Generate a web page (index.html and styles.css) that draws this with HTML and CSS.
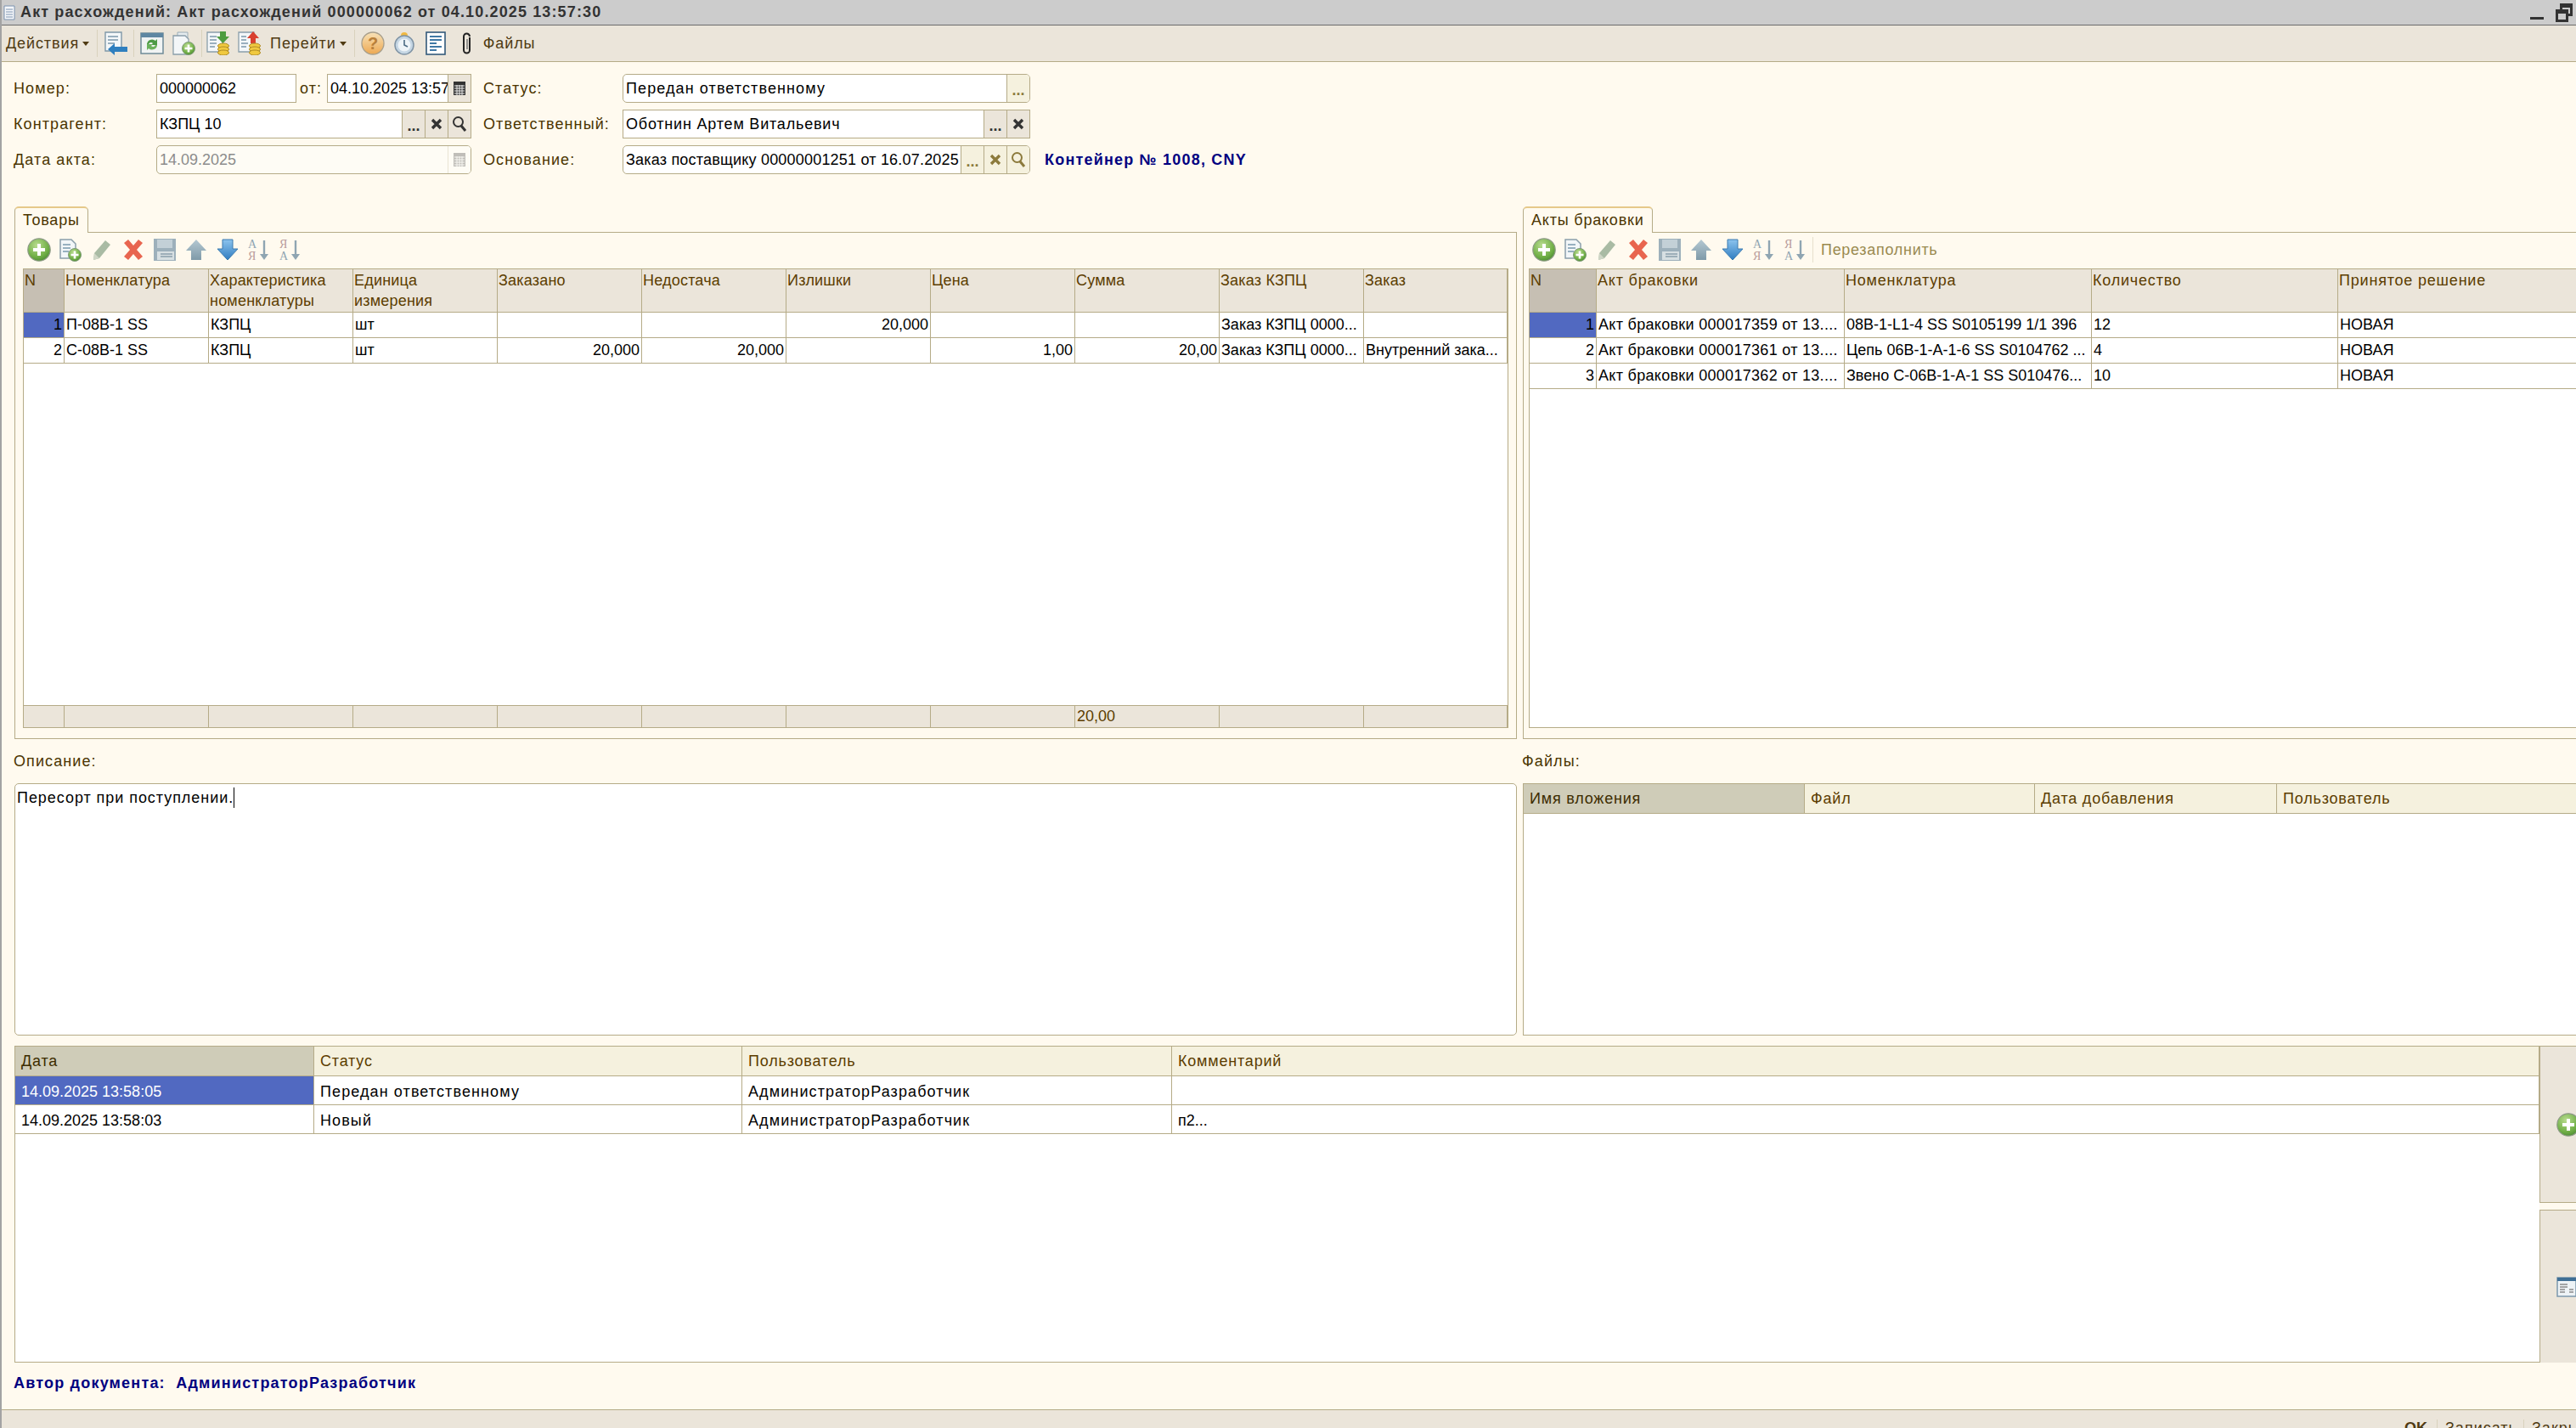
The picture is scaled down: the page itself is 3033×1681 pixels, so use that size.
FILE: index.html
```html
<!DOCTYPE html>
<html lang="ru">
<head>
    <meta charset="utf-8">
    <title>Акт расхождений</title>
    <link rel="stylesheet" href="styles.css">
</head>
<body>
    <!-- набор иконок -->
    <svg class="sprite" xmlns="http://www.w3.org/2000/svg">
        <defs>
            <radialGradient id="g-green" cx="40%" cy="30%" r="75%">
                <stop offset="0" stop-color="#b9dc8f"/>
                <stop offset="0.7" stop-color="#6fae45"/>
                <stop offset="1" stop-color="#4c8a34"/>
            </radialGradient>
            <linearGradient id="g-blue" x1="0" y1="0" x2="0" y2="1">
                <stop offset="0" stop-color="#8cc4ee"/>
                <stop offset="1" stop-color="#2f7cc0"/>
            </linearGradient>
            <linearGradient id="g-gray" x1="0" y1="0" x2="0" y2="1">
                <stop offset="0" stop-color="#b4c8d2"/>
                <stop offset="1" stop-color="#7f9aa8"/>
            </linearGradient>
            <linearGradient id="g-orange" x1="0" y1="0" x2="0" y2="1">
                <stop offset="0" stop-color="#f8e2b8"/>
                <stop offset="1" stop-color="#eda851"/>
            </linearGradient>
        </defs>
        <symbol id="i-add" viewBox="0 0 28 28">
            <circle cx="14" cy="14" r="13.2" fill="url(#g-green)" stroke="#8d9a86" stroke-width="1.2"/>
            <path d="M14 7v14M7 14h14" stroke="#fff" stroke-width="4"/>
        </symbol>
        <symbol id="i-copyadd" viewBox="0 0 28 28">
            <path d="M2 2h13l5 5v17H2z" fill="#f2f6f8" stroke="#8a9eaa" stroke-width="1.5"/>
            <path d="M5 8h9M5 12h9M5 16h7" stroke="#7a99ad" stroke-width="1.6"/>
            <circle cx="19" cy="20" r="7.5" fill="url(#g-green)" stroke="#7f9a78"/>
            <path d="M19 15.5v9M14.5 20h9" stroke="#fff" stroke-width="2.6"/>
        </symbol>
        <symbol id="i-edit" viewBox="0 0 28 28">
            <path d="M18 3l6 5-13 16-7 2 1-8z" fill="#a9bba4"/>
            <path d="M5 18l6 6-7 2z" fill="#cfd6c6"/>
        </symbol>
        <symbol id="i-del" viewBox="0 0 28 28">
            <path d="M3 6l5-4 6 7 6-7 5 4-7 8 7 8-5 4-6-7-6 7-5-4 7-8z" fill="#e8654f"/>
        </symbol>
        <symbol id="i-save" viewBox="0 0 28 28">
            <rect x="1" y="1" width="26" height="26" fill="#9db0bb"/>
            <rect x="5" y="2" width="18" height="10" fill="#c3d0d7"/>
            <rect x="5" y="16" width="20" height="10" fill="#d7dfe2"/>
            <path d="M9 19h14M9 22h14" stroke="#8aa0ac" stroke-width="1.500"/>
        </symbol>
        <symbol id="i-up" viewBox="0 0 28 28">
            <path d="M14 2l12 13h-6v11H8V15H2z" fill="url(#g-gray)"/>
        </symbol>
        <symbol id="i-down" viewBox="0 0 28 28">
            <path d="M8 2h12v11h6L14 26 2 13h6z" fill="url(#g-blue)" stroke="#3a7ab0"/>
        </symbol>
        <symbol id="i-sortarrow" viewBox="0 0 28 28">
            <path d="M20 3v19" stroke="#8fa5b2" stroke-width="2.4"/>
            <path d="M15 19h10l-5 7z" fill="#8fa5b2"/>
        </symbol>
        <symbol id="i-docback" viewBox="0 0 28 28">
            <path d="M2 1h19v22H2z" fill="#f4f7f9" stroke="#7f98a8" stroke-width="1.4"/>
            <path d="M5 6h12M5 10h12M5 14h8" stroke="#7b98ab" stroke-width="1.6"/>
            <path d="M28 18v6H13v4L5 21l8-7v4z" fill="#2f7fbf"/>
        </symbol>
        <symbol id="i-refresh" viewBox="0 0 28 28">
            <rect x="1" y="2" width="26" height="24" fill="#f0f3f3" stroke="#6f8a98" stroke-width="1.5"/>
            <rect x="1" y="2" width="26" height="5" fill="#5f87a2"/>
            <path d="M8 15a6 6 0 0 1 10-4l2-2v7h-7l2-2a3 3 0 0 0-5 1z" fill="#4c9a45"/>
            <path d="M20 16a6 6 0 0 1-10 4l-2 2v-7h7l-2 2a3 3 0 0 0 5-1z" fill="#6bb25c"/>
        </symbol>
        <symbol id="i-docplus" viewBox="0 0 28 28">
            <path d="M7 1h12v20H7z" fill="#e5ebee" stroke="#9aacb6"/>
            <path d="M2 5h14l4 4v18H2z" fill="#f3f6f8" stroke="#8a9eaa" stroke-width="1.3"/>
            <circle cx="20" cy="20" r="7.5" fill="url(#g-green)" stroke="#7f9a78"/>
            <path d="M20 15.5v9M15.5 20h9" stroke="#fff" stroke-width="2.6"/>
        </symbol>
        <symbol id="i-docin" viewBox="0 0 28 28">
            <path d="M1 1h18v23H1z" fill="#f4f7f9" stroke="#8a9eaa" stroke-width="1.3"/>
            <path d="M4 6h8M4 10h8M4 14h8M4 18h6" stroke="#7b98ab" stroke-width="1.6"/>
            <path d="M16 0h7v6h4l-7.500 8L12 6h4z" fill="#4d9c3f"/>
            <ellipse cx="20" cy="17" rx="6.500" ry="3" fill="#f0c93f" stroke="#b08c24"/>
            <ellipse cx="20" cy="21" rx="6.500" ry="3" fill="#f0c93f" stroke="#b08c24"/>
            <ellipse cx="20" cy="25" rx="6.500" ry="3" fill="#f0c93f" stroke="#b08c24"/>
        </symbol>
        <symbol id="i-docout" viewBox="0 0 28 28">
            <path d="M1 1h18v23H1z" fill="#f4f7f9" stroke="#8a9eaa" stroke-width="1.3"/>
            <path d="M4 6h6M4 10h6M4 14h8M4 18h6" stroke="#7b98ab" stroke-width="1.6"/>
            <path d="M15 14V8h-4l7-8 7 8h-4v6z" fill="#d9402f"/>
            <ellipse cx="20" cy="17" rx="6.500" ry="3" fill="#f0c93f" stroke="#b08c24"/>
            <ellipse cx="20" cy="21" rx="6.500" ry="3" fill="#f0c93f" stroke="#b08c24"/>
            <ellipse cx="20" cy="25" rx="6.500" ry="3" fill="#f0c93f" stroke="#b08c24"/>
        </symbol>
        <symbol id="i-clock" viewBox="0 0 28 28">
            <circle cx="14" cy="5" r="4" fill="#f0b942"/>
            <circle cx="14" cy="16" r="11" fill="#c5d6e4" stroke="#7f93a4" stroke-width="1.5"/>
            <circle cx="14" cy="16" r="7.500" fill="#eef4f8"/>
            <path d="M14 10v6l4 2" fill="none" stroke="#4c6b84" stroke-width="1.6"/>
        </symbol>
        <symbol id="i-list" viewBox="0 0 28 28">
            <rect x="3" y="1" width="22" height="26" fill="#fff" stroke="#33597a" stroke-width="1.6"/>
            <path d="M7 6h14M7 10h14M7 14h8M7 18h14M7 22h8" stroke="#3f78a5" stroke-width="1.8"/>
        </symbol>
        <symbol id="i-clip" viewBox="0 0 14 28">
            <path d="M10 7v15a3.500 3.500 0 0 1-7 0V6a3 3 0 0 1 7 0" fill="none" stroke="#222" stroke-width="2"/>
            <path d="M7 9v12" stroke="#777" stroke-width="1.500"/>
        </symbol>
        <symbol id="i-calendar" viewBox="0 0 16 18">
            <rect x="1" y="1" width="14" height="16" fill="#333"/>
            <path d="M2 6h12M2 9h12M2 12h12M2 15h12M5 5v12M8 5v12M11 5v12" stroke="#eee" stroke-width="1"/>
        </symbol>
        <symbol id="i-search" viewBox="0 0 18 20">
            <circle cx="7.500" cy="7.500" r="5.500" fill="none" stroke="currentColor" stroke-width="2"/>
            <path d="M11 12l5 6" stroke="currentColor" stroke-width="3"/>
        </symbol>
        <symbol id="i-cross" viewBox="0 0 14 14">
            <path d="M2 2l10 10M12 2L2 12" stroke="currentColor" stroke-width="3.400"/>
        </symbol>
        <symbol id="i-form" viewBox="0 0 24 24">
            <rect x="1" y="1" width="22" height="22" fill="#eef3f6" stroke="#7c98ad" stroke-width="1.500"/>
            <rect x="1" y="1" width="22" height="4" fill="#3f6f95"/>
            <path d="M4 9h9M4 12h9M4 15h6M4 18h6M15 15h5M15 18h5" stroke="#8b8b8b" stroke-width="1.500"/>
        </symbol>
    </svg>

    <div class="window">
        <div class="titlebar">
            <svg class="title-icon" viewBox="0 0 14 18"><path d="M1 1h12v16H1z" fill="#f5f7fa" stroke="#7d93b0"/><path d="M3 5h8M3 8h8M3 11h8M3 14h8" stroke="#7d93b0"/></svg>
            <span class="title-text">Акт расхождений: Акт расхождений 000000062 от 04.10.2025 13:57:30</span>
            <span class="win-min"></span>
            <span class="win-restore"><i class="win-back"></i><i class="win-front"></i></span>
        </div>

        <div class="toolbar">
            <span class="tb-menu">Действия<i class="caret"></i></span>
            <span class="tb-sep"></span>
            <svg class="tb-icon"><use href="#i-docback"/></svg>
            <span class="tb-sep"></span>
            <svg class="tb-icon"><use href="#i-refresh"/></svg>
            <svg class="tb-icon"><use href="#i-docplus"/></svg>
            <span class="tb-sep"></span>
            <svg class="tb-icon tb-icon-tight"><use href="#i-docin"/></svg>
            <svg class="tb-icon"><use href="#i-docout"/></svg>
            <span class="tb-menu tb-menu-go">Перейти<i class="caret"></i></span>
            <span class="tb-sep"></span>
            <svg class="tb-icon" viewBox="0 0 28 28">
                <circle cx="14" cy="14" r="13" fill="url(#g-orange)" stroke="#a89f8c" stroke-width="1.3"/>
                <text x="14" y="21" class="i-help-text">?</text>
            </svg>
            <svg class="tb-icon"><use href="#i-clock"/></svg>
            <svg class="tb-icon"><use href="#i-list"/></svg>
            <svg class="tb-clip"><use href="#i-clip"/></svg>
            <span class="tb-menu tb-files">Файлы</span>
        </div>

        <div class="form">
            <!-- шапка документа -->
            <div class="fields">
                <label class="lbl">Номер:</label>
                <div class="pair">
                    <div class="field field-number"><span class="field-text">000000062</span></div>
                    <span class="lbl lbl-from">от:</span>
                    <div class="field field-date">
                        <span class="field-text">04.10.2025 13:57:30</span>
                        <span class="fbtn"><svg class="ic-cal"><use href="#i-calendar"/></svg></span>
                    </div>
                </div>
                <label class="lbl lbl-mid">Статус:</label>
                <div class="field field-round">
                    <span class="field-text cyr">Передан ответственному</span>
                    <span class="fbtn fbtn-soft"><b class="dots">...</b></span>
                </div>
                <span></span>

                <label class="lbl">Контрагент:</label>
                <div class="field">
                    <span class="field-text">КЗПЦ 10</span>
                    <span class="fbtn"><b class="dots">...</b></span>
                    <span class="fbtn"><svg class="ic-cross"><use href="#i-cross"/></svg></span>
                    <span class="fbtn"><svg class="ic-search"><use href="#i-search"/></svg></span>
                </div>
                <label class="lbl lbl-mid">Ответственный:</label>
                <div class="field">
                    <span class="field-text cyr-soft">Оботнин Артем Витальевич</span>
                    <span class="fbtn"><b class="dots">...</b></span>
                    <span class="fbtn"><svg class="ic-cross"><use href="#i-cross"/></svg></span>
                </div>
                <span></span>

                <label class="lbl">Дата акта:</label>
                <div class="field field-round field-off">
                    <span class="field-text">14.09.2025</span>
                    <span class="fbtn fbtn-off"><svg class="ic-cal ic-cal-off"><use href="#i-calendar"/></svg></span>
                </div>
                <label class="lbl lbl-mid">Основание:</label>
                <div class="field field-round">
                    <span class="field-text field-basis">Заказ поставщику 00000001251 от 16.07.2025</span>
                    <span class="fbtn fbtn-soft"><b class="dots">...</b></span>
                    <span class="fbtn fbtn-soft"><svg class="ic-cross"><use href="#i-cross"/></svg></span>
                    <span class="fbtn fbtn-soft"><svg class="ic-search"><use href="#i-search"/></svg></span>
                </div>
                <span class="container-note">Контейнер № 1008, CNY</span>
            </div>

            <!-- табличные части -->
            <div class="panels">
                <div class="panel-col">
                    <div class="tabs"><span class="tab">Товары</span><span class="tab-line"></span></div>
                    <div class="panel">
                        <div class="list-tools">
                            <svg class="lt-icon"><use href="#i-add"/></svg>
                            <svg class="lt-icon"><use href="#i-copyadd"/></svg>
                            <svg class="lt-icon"><use href="#i-edit"/></svg>
                            <svg class="lt-icon"><use href="#i-del"/></svg>
                            <svg class="lt-icon"><use href="#i-save"/></svg>
                            <svg class="lt-icon"><use href="#i-up"/></svg>
                            <svg class="lt-icon"><use href="#i-down"/></svg>
                            <svg class="lt-icon" viewBox="0 0 28 28"><use href="#i-sortarrow"/><text x="1" y="12" class="i-sort-text i-sort-a">А</text><text x="1" y="26" class="i-sort-text i-sort-z">Я</text></svg>
                            <svg class="lt-icon" viewBox="0 0 28 28"><use href="#i-sortarrow"/><text x="1" y="12" class="i-sort-text i-sort-z">Я</text><text x="1" y="26" class="i-sort-text i-sort-a">А</text></svg>
                        </div>
                        <div class="grid-box">
                            <table class="grid grid-goods">
                                <colgroup>
                                    <col class="c-n"><col class="c-170"><col class="c-170"><col class="c-170"><col class="c-170"><col class="c-170"><col class="c-170"><col class="c-170"><col class="c-170"><col class="c-170"><col class="c-169">
                                </colgroup>
                                <tr class="head">
                                    <th class="th-n">N</th><th>Номенклатура</th><th>Характеристика номенклатуры</th><th>Единица измерения</th><th>Заказано</th><th>Недостача</th><th>Излишки</th><th>Цена</th><th>Сумма</th><th>Заказ КЗПЦ</th><th>Заказ</th>
                                </tr>
                                <tr>
                                    <td class="num td-sel">1</td><td>П-08В-1 SS</td><td>КЗПЦ</td><td>шт</td><td></td><td></td><td class="num">20,000</td><td></td><td></td><td>Заказ КЗПЦ 0000...</td><td></td>
                                </tr>
                                <tr>
                                    <td class="num">2</td><td>С-08В-1 SS</td><td>КЗПЦ</td><td>шт</td><td class="num">20,000</td><td class="num">20,000</td><td></td><td class="num">1,00</td><td class="num">20,00</td><td>Заказ КЗПЦ 0000...</td><td>Внутренний зака...</td>
                                </tr>
                            </table>
                            <table class="grid grid-total">
                                <colgroup>
                                    <col class="c-n"><col class="c-170"><col class="c-170"><col class="c-170"><col class="c-170"><col class="c-170"><col class="c-170"><col class="c-170"><col class="c-170"><col class="c-170"><col class="c-169">
                                </colgroup>
                                <tr>
                                    <td></td><td></td><td></td><td></td><td></td><td></td><td></td><td></td><td>20,00</td><td></td><td></td>
                                </tr>
                            </table>
                        </div>
                    </div>
                </div>
                <div class="panel-col">
                    <div class="tabs"><span class="tab">Акты браковки</span><span class="tab-line"></span></div>
                    <div class="panel panel-acts">
                        <div class="list-tools">
                            <svg class="lt-icon"><use href="#i-add"/></svg>
                            <svg class="lt-icon"><use href="#i-copyadd"/></svg>
                            <svg class="lt-icon"><use href="#i-edit"/></svg>
                            <svg class="lt-icon"><use href="#i-del"/></svg>
                            <svg class="lt-icon"><use href="#i-save"/></svg>
                            <svg class="lt-icon"><use href="#i-up"/></svg>
                            <svg class="lt-icon"><use href="#i-down"/></svg>
                            <svg class="lt-icon" viewBox="0 0 28 28"><use href="#i-sortarrow"/><text x="1" y="12" class="i-sort-text i-sort-a">А</text><text x="1" y="26" class="i-sort-text i-sort-z">Я</text></svg>
                            <svg class="lt-icon" viewBox="0 0 28 28"><use href="#i-sortarrow"/><text x="1" y="12" class="i-sort-text i-sort-z">Я</text><text x="1" y="26" class="i-sort-text i-sort-a">А</text></svg>
                            <span class="lt-sep"></span>
                            <span class="lt-cmd">Перезаполнить</span>
                        </div>
                        <div class="grid-box">
                            <table class="grid grid-acts">
                                <colgroup>
                                    <col class="c-n2"><col class="c-292"><col class="c-291"><col class="c-290"><col class="c-rest">
                                </colgroup>
                                <tr class="head">
                                    <th class="th-n">N</th><th>Акт браковки</th><th>Номенклатура</th><th>Количество</th><th>Принятое решение</th>
                                </tr>
                                <tr>
                                    <td class="num td-sel">1</td><td>Акт браковки 000017359 от 13....</td><td>08В-1-L1-4 SS S0105199 1/1 396</td><td>12</td><td>НОВАЯ</td>
                                </tr>
                                <tr>
                                    <td class="num">2</td><td>Акт браковки 000017361 от 13....</td><td>Цепь 06В-1-А-1-6 SS S0104762 ...</td><td>4</td><td>НОВАЯ</td>
                                </tr>
                                <tr>
                                    <td class="num">3</td><td>Акт браковки 000017362 от 13....</td><td>Звено С-06В-1-А-1 SS S010476...</td><td>10</td><td>НОВАЯ</td>
                                </tr>
                            </table>
                        </div>
                    </div>
                </div>
            </div>

            <!-- описание и файлы -->
            <div class="captions">
                <span class="lbl">Описание:</span>
                <span class="lbl">Файлы:</span>
            </div>
            <div class="notes">
                <div class="memo"><span class="memo-text">Пересорт при поступлении.</span><i class="text-caret"></i></div>
                <div class="files">
                    <table class="grid grid-files">
                        <colgroup>
                            <col class="c-331"><col class="c-271"><col class="c-285"><col class="c-rest">
                        </colgroup>
                        <tr class="head-soft">
                            <th class="th-sort">Имя вложения</th><th>Файл</th><th>Дата добавления</th><th>Пользователь</th>
                        </tr>
                    </table>
                </div>
            </div>

            <!-- история статусов -->
            <div class="history">
                <div class="history-box">
                    <table class="grid grid-history">
                        <colgroup>
                            <col class="c-352"><col class="c-504"><col class="c-506"><col class="c-rest">
                        </colgroup>
                        <tr class="head-soft">
                            <th class="th-sort">Дата</th><th>Статус</th><th>Пользователь</th><th>Комментарий</th>
                        </tr>
                        <tr>
                            <td class="td-sel">14.09.2025 13:58:05</td><td class="cyr">Передан ответственному</td><td class="cyr">АдминистраторРазработчик</td><td></td>
                        </tr>
                        <tr>
                            <td>14.09.2025 13:58:03</td><td class="cyr">Новый</td><td class="cyr">АдминистраторРазработчик</td><td>п2...</td>
                        </tr>
                    </table>
                </div>
                <div class="side">
                    <div class="side-btn side-btn-top"><svg class="lt-icon"><use href="#i-add"/></svg></div>
                    <div class="side-btn"><svg class="side-form"><use href="#i-form"/></svg></div>
                </div>
            </div>

            <div class="author">Автор документа:&nbsp; АдминистраторРазработчик</div>
        </div>

        <div class="footer">
            <span class="foot-btn foot-ok">OK</span>
            <span class="foot-btn">Записать</span>
            <span class="foot-btn">Закрыть</span>
        </div>
    </div>
</body>
</html>
```

FILE: styles.css
```css
/* страница */
html, body {
    margin: 0;
    height: 100%;
    overflow: hidden;
}

body {
    font-family: "Liberation Sans", Arial, sans-serif;
    font-size: 18px;
    color: #000;
    background: #fffaef;
}

/* display:none ломает градиенты в use */
.sprite {
    position: absolute;
    width: 0;
    height: 0;
}

.window {
    height: 1681px;
    width: 3033px;
    box-sizing: border-box;
    border-left: 2px solid #a3a3a3;
    display: flex;
    flex-direction: column;
    overflow: hidden;
}

/* кириллица в оригинале шире латиницы и цифр */
.cyr {
    letter-spacing: 1.1px;
}

.cyr-soft {
    letter-spacing: 0.8px;
}

/* заголовок окна */
.titlebar {
    height: 29px;
    flex: none;
    background: #ccc;
    border-bottom: 1px solid #6b6b6b;
    display: flex;
    align-items: center;
    padding-left: 2px;
    padding-right: 4px;
}

.title-icon {
    width: 14px;
    height: 18px;
    margin-right: 6px;
}

.title-text {
    font-weight: bold;
    color: #333;
    flex: 1;
    letter-spacing: 1.13px;
}

.win-min {
    width: 16px;
    height: 3px;
    background: #333;
    margin-right: 14px;
    margin-top: 14px;
}

.win-restore {
    display: block;
    width: 20px;
    height: 22px;
    position: relative;
}

.win-back, .win-front {
    position: absolute;
    box-sizing: border-box;
    border: 3px solid #333;
    border-top-width: 5px;
    width: 15px;
    height: 15px;
}

.win-back {
    right: 0;
    top: 0;
}

.win-front {
    left: 0;
    bottom: 0;
    background: #ccc;
}

/* панель команд */
.toolbar {
    height: 42px;
    flex: none;
    background: #ebe5da;
    border-bottom: 1px solid #b5ab87;
    display: flex;
    align-items: center;
    padding-left: 5px;
    gap: 7px;
    color: #4f3a12;
}

.tb-menu {
    display: flex;
    align-items: center;
    white-space: nowrap;
    letter-spacing: 0.9px;
}

.tb-menu-go {
    margin-left: 3px;
}

.caret {
    width: 0;
    height: 0;
    margin-left: 4px;
    margin-right: 2px;
    border-left: 4px solid transparent;
    border-right: 4px solid transparent;
    border-top: 5px solid #4f3a12;
}

.tb-sep {
    width: 1px;
    height: 32px;
    background: #d9d2bd;
}

.tb-icon {
    width: 28px;
    height: 28px;
}

.tb-icon + .tb-icon {
    margin-left: 2px;
}

.tb-icon-tight {
    margin-left: -2px;
}

.tb-clip {
    width: 14px;
    height: 28px;
    margin-left: 9px;
}

.tb-files {
    margin-left: 5px;
}

/* реквизиты */
.form {
    flex: 1;
    min-height: 0;
    display: flex;
    flex-direction: column;
    padding-left: 15px;
}

.fields {
    display: grid;
    grid-template-columns: 167px 371px 178px 480px 1fr;
    grid-auto-rows: 34px;
    row-gap: 8px;
    margin-top: 14px;
    align-items: center;
}

.lbl {
    color: #4b3500;
    white-space: nowrap;
    letter-spacing: 1.1px;
    margin-left: -1px;
}

.lbl-mid {
    margin-left: 14px;
}

.pair {
    display: flex;
    align-items: center;
    height: 34px;
}

.field {
    height: 34px;
    box-sizing: border-box;
    border: 1px solid #b5ab87;
    background: #fff;
    display: flex;
    overflow: hidden;
}

.field-number {
    width: 165px;
    flex: none;
}

.lbl-from {
    width: 36px;
    flex: none;
    margin-left: 0;
    padding-left: 4px;
    box-sizing: border-box;
}

.field-date {
    width: 170px;
    flex: none;
}

.field-round {
    border-radius: 5px;
}

.field-off {
    background: #fefcf5;
    color: #8c8c8c;
}

.field-text {
    flex: 1;
    min-width: 0;
    padding-left: 3px;
    line-height: 32px;
    white-space: nowrap;
    overflow: hidden;
}

.field-basis {
    letter-spacing: 0.2px;
}

.fbtn {
    flex: none;
    width: 26px;
    border-left: 1px solid #b5ab87;
    background: #ebe5da;
    display: flex;
    align-items: center;
    justify-content: center;
    color: #333;
}

.fbtn-soft {
    background: #f5f1de;
    color: #8c7a3c;
}

.fbtn-off {
    background: #fefcf5;
    border-left-color: #e9e4d3;
}

.dots {
    font-size: 18px;
    line-height: 34px;
    padding-top: 4px;
}

.ic-cal {
    width: 16px;
    height: 18px;
}

.ic-cal-off {
    opacity: 0.3;
}

.ic-cross {
    width: 14px;
    height: 14px;
}

.ic-search {
    width: 18px;
    height: 20px;
}

.container-note {
    font-weight: bold;
    color: #000080;
    margin-left: 17px;
    white-space: nowrap;
    letter-spacing: 1.2px;
}

/* панели с вкладками */
.panels {
    display: grid;
    grid-template-columns: 1769px 1300px;
    column-gap: 7px;
    margin-top: 38px;
}

.tabs {
    display: flex;
    height: 31px;
}

.tab {
    height: 31px;
    box-sizing: border-box;
    border: 1px solid #b5ab87;
    border-top: 2px solid #e6c98a;
    border-bottom: none;
    border-radius: 5px 5px 0 0;
    padding: 0 9px;
    line-height: 28px;
    color: #4b3500;
    letter-spacing: 0.8px;
}

.tab-line {
    flex: 1;
    border-bottom: 1px solid #b5ab87;
}

.panel {
    border: 1px solid #b5ab87;
    border-top: none;
    height: 596px;
    box-sizing: border-box;
    padding: 0 9px 12px;
    display: flex;
    flex-direction: column;
}

.panel-acts {
    padding-left: 6px;
}

.list-tools {
    height: 42px;
    box-sizing: border-box;
    padding-bottom: 2px;
    flex: none;
    display: flex;
    align-items: center;
    gap: 9px;
    padding-left: 5px;
}

.panel-acts .list-tools {
    padding-left: 4px;
}

.lt-icon {
    width: 28px;
    height: 28px;
    flex: none;
}

.lt-sep {
    width: 1px;
    height: 30px;
    background: #e6e0cc;
    margin-left: -3px;
}

.lt-cmd {
    color: #9a8a50;
    letter-spacing: 0.7px;
}

.i-sort-text {
    font-family: "Liberation Serif", serif;
    font-size: 14px;
}

.i-sort-a {
    fill: #8fa5b2;
}

.i-sort-z {
    fill: #b89a9a;
}

.i-help-text {
    font-size: 20px;
    font-weight: bold;
    text-anchor: middle;
    fill: #b9803a;
    letter-spacing: 0;
}

/* таблицы */
.grid-box {
    flex: 1;
    min-height: 0;
    border: 1px solid #b5ab87;
    background: #fff;
    display: flex;
    flex-direction: column;
    justify-content: space-between;
    overflow: hidden;
}

.grid {
    table-layout: fixed;
    border-collapse: separate;
    border-spacing: 0;
    width: 100%;
}

.grid th, .grid td {
    box-sizing: border-box;
    border-right: 1px solid #b5ab87;
    border-bottom: 1px solid #b5ab87;
    padding: 0 2px;
    font-weight: normal;
    text-align: left;
    white-space: nowrap;
    overflow: hidden;
    height: 30px;
}

.grid tr:first-child th {
    color: #5c3d00;
}

.grid .head th {
    background: #ebe5da;
    height: 51px;
    vertical-align: top;
    white-space: normal;
    line-height: 24px;
    padding-top: 1px;
    padding-left: 1px;
    letter-spacing: 0.2px;
}

.grid-acts .head th {
    letter-spacing: 0.8px;
}

.grid .head .th-n {
    background: #c6bfb3;
}

.grid td.num {
    text-align: right;
}

.grid td.td-sel {
    background: #5169c1;
    color: #fff;
}

.grid-goods td.td-sel, .grid-acts td.td-sel {
    color: #000;
}

.grid-acts td:nth-child(2) {
    letter-spacing: 0.3px;
}

.grid-total td {
    background: #ebe5da;
    color: #5c3d00;
    border-top: 1px solid #b5ab87;
    border-bottom: none;
    height: 26px;
}

.c-n { width: 48px; }
.c-n2 { width: 79px; }
.c-169 { width: 169px; }
.c-170 { width: 170px; }
.c-290 { width: 290px; }
.c-291 { width: 291px; }
.c-292 { width: 292px; }
.c-271 { width: 271px; }
.c-285 { width: 285px; }
.c-331 { width: 331px; }
.c-352 { width: 352px; }
.c-504 { width: 504px; }
.c-506 { width: 506px; }

.grid-acts, .grid-files {
    width: 1400px;
}

/* описание и файлы */
.captions {
    display: grid;
    grid-template-columns: 1769px 1300px;
    column-gap: 7px;
    height: 52px;
    align-items: center;
    flex: none;
}

.notes {
    display: grid;
    grid-template-columns: 1769px 1300px;
    column-gap: 7px;
    height: 297px;
    flex: none;
}

.memo {
    border: 1px solid #b5ab87;
    border-radius: 5px;
    background: #fff;
    padding: 3px 2px;
    line-height: 26px;
    display: flex;
    align-items: flex-start;
}

.memo-text {
    letter-spacing: 0.95px;
}

.text-caret {
    display: block;
    width: 1px;
    height: 24px;
    background: #000;
    margin-top: 1px;
}

.files {
    border: 1px solid #b5ab87;
    background: #fff;
    overflow: hidden;
}

.grid .head-soft th {
    background: #f5f1de;
    height: 35px;
    padding-left: 7px;
    letter-spacing: 0.8px;
}

.grid .head-soft .th-sort {
    background: #cfccb8;
    color: #3d2c00;
}

/* история */
.history {
    margin-top: 12px;
    height: 373px;
    flex: none;
    display: flex;
}

.history-box {
    width: 2973px;
    flex: none;
    box-sizing: border-box;
    border: 1px solid #b5ab87;
    border-right: none;
    background: #fff;
}

.grid-history td {
    height: 34px;
    padding: 3px 2px 0 7px;
}

.side {
    flex: 1;
    display: flex;
    flex-direction: column;
    gap: 8px;
}

.side-btn {
    flex: 1;
    box-sizing: border-box;
    background: #ebe5da;
    border-left: 1px solid #b5ab87;
    border-top: 1px solid #b5ab87;
    padding-left: 19px;
    display: flex;
    align-items: center;
}

.side-btn-top {
    flex: 0 0 185px;
    border-bottom: 1px solid #b5ab87;
}

.side-form {
    width: 24px;
    height: 24px;
    flex: none;
}

/* автор */
.author {
    height: 55px;
    flex: none;
    display: flex;
    align-items: center;
    font-weight: bold;
    color: #000080;
    padding-bottom: 7px;
    margin-left: -1px;
    box-sizing: border-box;
    letter-spacing: 1.2px;
    white-space: pre;
}

/* нижняя панель */
.footer {
    flex: none;
    width: 3071px;
    height: 22px;
    box-sizing: border-box;
    background: #ebe5da;
    border-top: 1px solid #b5ab87;
    display: flex;
    justify-content: flex-end;
    overflow: hidden;
}

.foot-btn {
    color: #4f3a12;
    line-height: 20px;
    margin-top: 11px;
    padding: 0 9px;
    border-left: 1px solid #d9d2bd;
    white-space: nowrap;
    flex: none;
    box-sizing: border-box;
    width: 102px;
    letter-spacing: 1px;
}

.foot-ok {
    font-weight: bold;
    border-left: none;
    width: 38px;
    padding: 0;
    letter-spacing: 0;
}
```
